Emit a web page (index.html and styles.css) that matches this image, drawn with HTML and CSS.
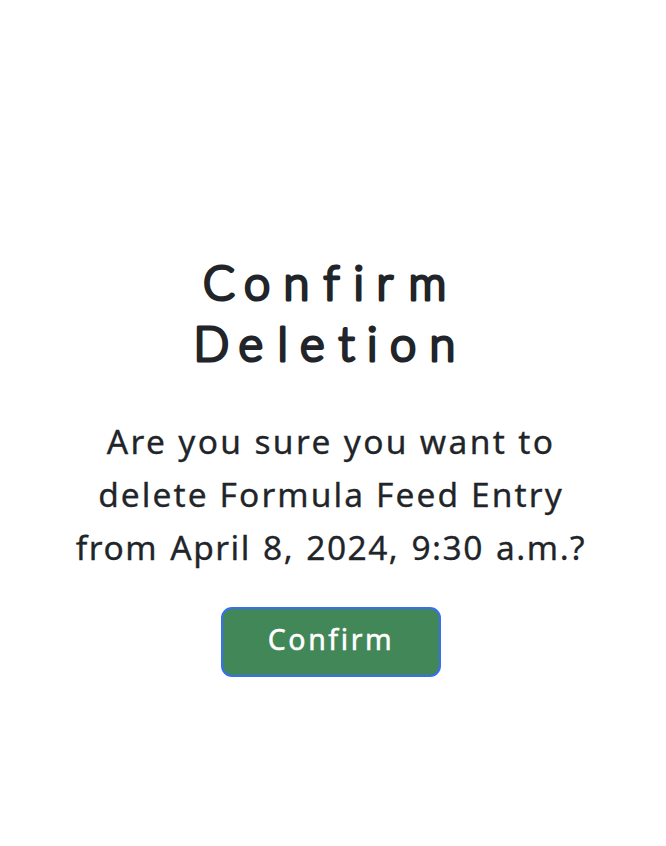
FILE: index.html
```html
<!DOCTYPE html>
<html lang="en">
<head>
<meta charset="utf-8">
<title>Confirm Deletion</title>
<link rel="stylesheet" href="styles.css">
</head>
<body>
<main class="dialog">
  <h1 class="title">
    <svg class="title-text" width="300" height="122" viewBox="0 0 300 122">
      <text x="22 63 102.5 142.5 172.5 195.5 227.5" y="46.5">Confirm</text>
      <text x="12.5 57.5 96.5 119 157.5 186 209 248.5" y="107.5">Deletion</text>
    </svg>
  </h1>
  <p class="message"><span class="line-one">Are you sure you want to</span><span class="line-two">delete Formula Feed Entry</span><span class="line-three">from April 8, 2024, 9:30 a.m.?</span></p>
  <button class="confirm" type="button">Confirm</button>
</main>
</body>
</html>
```
FILE: styles.css
```css
* {
  box-sizing: border-box;
}

body {
  margin: 0;
  background: #fff;
  color: #212529;
  font-family: "Noto Sans", "Open Sans", sans-serif;
}

.dialog {
  display: flex;
  flex-direction: column;
  align-items: center;
  min-height: 846px;
  padding: 253px 4px 0 0;
}

.title {
  margin: 0 0 40px;
  height: 122px;
}

/* Round joins soften the corners of the letters */
.title-text {
  display: block;
  overflow: visible;
  font-family: Lato, sans-serif;
  font-size: 47px;
  font-weight: 300;
  font-variant-ligatures: none;
  fill: #212529;
  stroke: #212529;
  stroke-width: 3.2px;
  stroke-linejoin: round;
}

.message span {
  display: block;
  white-space: nowrap;
}

.message {
  margin: 0 0 33px;
  font-size: 33.5px;
  line-height: 53px;
  text-align: center;
  -webkit-text-stroke: 0.3px #212529;
}

.line-one {
  letter-spacing: 2.35px;
}

.line-two {
  letter-spacing: 2.1px;
}

.message .line-three {
  letter-spacing: 1.5px;
  word-spacing: 1.9px;
}

.confirm {
  width: 220px;
  height: 70px;
  padding: 0 0 6px;
  border: 2px solid #366ef4;
  border-radius: 11px;
  background: #418758;
  color: #fff;
  font-family: inherit;
  font-size: 28.5px;
  font-weight: 400;
  line-height: 40px;
  letter-spacing: 2.6px;
  -webkit-text-stroke: 0.5px #fff;
}
```
